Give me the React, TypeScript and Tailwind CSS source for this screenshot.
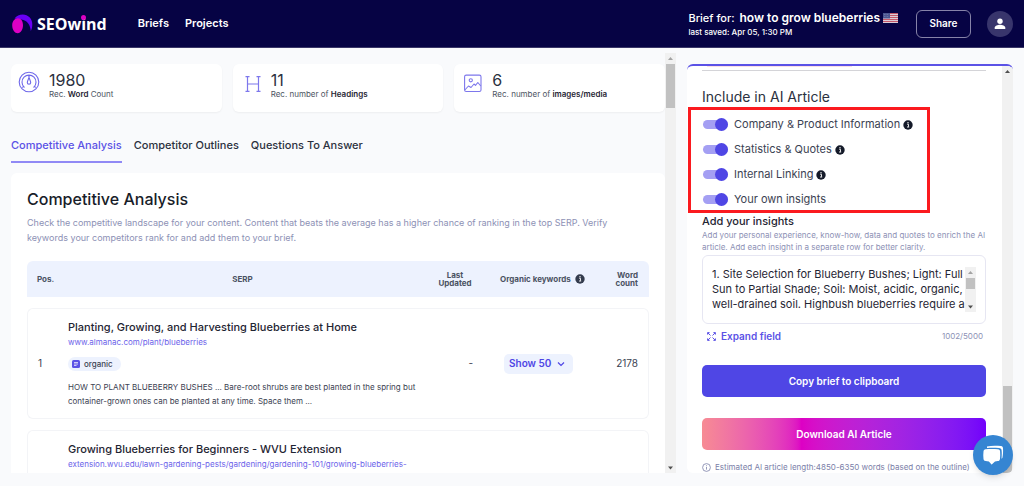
import { useState } from 'react';

const stats = [
  { value: '1980', before: 'Rec. ', bold: 'Word', after: ' Count', icon: <GaugeIcon /> },
  { value: '11', before: 'Rec. number of ', bold: 'Headings', after: '', icon: <HeadingIcon /> },
  { value: '6', before: 'Rec. number of ', bold: 'images/media', after: '', icon: <ImageIcon /> },
];

const tabs = ['Competitive Analysis', 'Competitor Outlines', 'Questions To Answer'];

type SerpRow = {
  title: string;
  url: string;
  pos?: number;
  type?: string;
  text?: string;
  updated?: string;
  keywords?: number;
  words?: number;
};

const serpData: SerpRow[] = [
  {
    pos: 1,
    title: 'Planting, Growing, and Harvesting Blueberries at Home',
    url: 'www.almanac.com/plant/blueberries',
    type: 'organic',
    text: 'HOW TO PLANT BLUEBERRY BUSHES ... Bare-root shrubs are best planted in the spring but container-grown ones can be planted at any time. Space them ...',
    updated: '-',
    keywords: 50,
    words: 2178,
  },
  {
    title: 'Growing Blueberries for Beginners - WVU Extension',
    url: 'extension.wvu.edu/lawn-gardening-pests/gardening/gardening-101/growing-blueberries-',
  },
];

const options = [
  { label: 'Company & Product Information', info: true },
  { label: 'Statistics & Quotes', info: true },
  { label: 'Internal Linking', info: true },
  { label: 'Your own insights', info: false },
];

const defaultInsights =
  '1. Site Selection for Blueberry Bushes; Light: Full Sun to Partial Shade; Soil: Moist, acidic, organic, well-drained soil. Highbush blueberries require a';

function GaugeIcon() {
  return (
    <svg className="size-[22px]" viewBox="0 0 22 22" fill="none" stroke="#6f68ea" strokeWidth="1.1" strokeLinecap="round">
      <circle cx="11" cy="11" r="9.8" />
      <path d="M6.2 16.2a7 7 0 1 1 9.6 0M5.6 15.4l-1 .8M16.4 15.4l1 .8M11 4.2v1.4" />
      <path d="M11 6.5c-.8 2.2-1.7 3.8-1.7 5a1.7 1.7 0 0 0 3.4 0c0-1.2-.9-2.8-1.7-5z" />
    </svg>
  );
}

function HeadingIcon() {
  return (
    <svg className="size-[22px]" viewBox="0 0 22 22" fill="none" stroke="#7d77ec" strokeWidth="1.2">
      <path d="M7.5 6v14M18.500 6v14M7.500 13h11M5.500 5.600h4M16.500 5.600h4M5.500 20.400h4M16.500 20.400h4" />
    </svg>
  );
}

function ImageIcon() {
  return (
    <svg className="size-[22px]" viewBox="0 0 22 22" fill="none" stroke="#7d77ec" strokeWidth="1.1" strokeLinejoin="round">
      <rect x="3.600" y="4.100" width="16.400" height="16.400" rx="1.600" />
      <circle cx="9.800" cy="9.300" r="1.600" />
      <path d="M3.800 19l3.700-4 2.500 1.500 3-3.500 1.500 1.300 2.300-2.800 3 3.500" />
    </svg>
  );
}

function InfoIcon({ className = '' }) {
  return (
    <svg className={`size-[10px] shrink-0 ${className}`} viewBox="0 0 10 10">
      <circle cx="5" cy="5" r="4.7" fill="currentColor" />
      <path d="M4.2 4.3h1.3v2.5M4 7h2.2" stroke="#fff" strokeWidth="0.9" fill="none" />
      <circle cx="5" cy="2.7" r="0.7" fill="#fff" />
    </svg>
  );
}

function Flag() {
  return (
    <svg className="h-[10px] w-[15px]" viewBox="0 0 15 10">
      <rect width="15" height="10" fill="#dccdd6" />
      <path d="M0 .5h15M0 2.500h15M0 4.500h15M0 6.500h15M0 8.500h15" stroke="#c4586a" strokeWidth="1.100" />
      <rect width="7" height="5.500" fill="#4b5590" />
      <path d="M1 1.500h5M1 3.500h5" stroke="#8d94bd" strokeWidth="0.600" strokeDasharray="0.800 0.800" />
    </svg>
  );
}

function Logo() {
  return (
    <a href="#" className="flex items-center gap-1 font-['Open_Sans',sans-serif] text-[16px] leading-5 font-bold text-white">
      <svg className="h-5 w-[22px]" viewBox="0 0 22 20">
        <path d="M3.500 4.500C5.500 1.500 8.500.4 11.800.4c5.300 0 9.600 4.400 9.500 9.800 0 2.600-.5 5-1.500 6.800-.4-5.400-2.900-9.400-7.300-10.900C9.500 5 6 4.600 3.500 4.500z" fill="#6a00f5" />
        <path d="M6.800 4.300c3.500 0 5.200 3.200 5.200 6.900 0 4-2.200 8-5.200 8s-5.600-3.500-5.600-8c0-4 2.600-6.900 5.600-6.900z" fill="#dd00c4" />
      </svg>
      <span>
        SEOw
        <span className="relative">
          i
          <span className="absolute top-[2px] left-0 size-[5px] rounded-full bg-[#dd00c4]" />
        </span>
        nd
      </span>
    </a>
  );
}

function Arrow({ up = false, dim = false }) {
  return (
    <svg className={`h-[11px] w-full shrink-0 ${dim ? 'text-[#a3a3a3]' : 'text-[#505050]'}`} viewBox="0 0 11 11">
      <path d={up ? 'M5.5 4l2.5 3h-5z' : 'M5.5 7.5l2.5-3h-5z'} fill="currentColor" />
    </svg>
  );
}

const Header = () => (
  <header className="flex h-12 shrink-0 items-center border-b border-[#3a3768] bg-[#060344] px-[11px] font-semibold text-white">
    <Logo />
    <nav className="ml-[31px] flex flex-1 gap-4 text-[11px]">
      <a href="#">Briefs</a>
      <a href="#">Projects</a>
    </nav>
    <div className="mr-[18px]">
      <div className="flex items-center text-[12px] leading-4">
        <span className="mr-[5px] text-[11px] font-medium">Brief for:</span>
        <span className="mr-[3px]">how to grow blueberries</span>
        <Flag />
      </div>
      <p className="text-[8px] leading-3 font-medium">last saved: Apr 05, 1:30 PM</p>
    </div>
    <button className="mr-4 h-7 w-[55px] rounded-md border border-[#8683a8] text-[10px]">Share</button>
    <button aria-label="Account" className="flex size-[26px] items-center justify-center rounded-full bg-[#38356c]">
      <svg className="size-[14px]" viewBox="0 0 14 14" fill="#fff">
        <circle cx="7" cy="4.2" r="2.7" />
        <path d="M1.700 12v-1.200c0-2 3-3 5.300-3s5.300 1 5.300 3V12z" />
      </svg>
    </button>
  </header>
);

const SerpTable = () => (
  <table className="-mt-[11px] w-full table-fixed border-separate border-spacing-x-0 border-spacing-y-[11px] text-[#3b4252]">
    <colgroup>
      <col className="w-[30px]" />
      <col />
      <col className="w-[56px]" />
      <col className="w-[109px]" />
      <col className="w-[56px]" />
    </colgroup>
    <thead>
      <tr className="h-9 text-[8px] leading-2 font-semibold text-[#4b5263] [&>th]:bg-[#edf2fe]">
        <th className="rounded-tl-md pl-[10px] text-left">Pos.</th>
        <th>SERP</th>
        <th className="pr-[10px] pl-2">Last Updated</th>
        <th className="pl-4">
          <span className="flex items-center gap-1 whitespace-nowrap">
            Organic keywords <InfoIcon className="text-[#333b4d]" />
          </span>
        </th>
        <th className="rounded-tr-md pr-[11px] text-right">Word count</th>
      </tr>
    </thead>
    <tbody>
      {serpData.map((row) => (
        <tr key={row.title} className="h-[111px] text-[10px] [&>td]:border-y [&>td]:border-[#f3f4f7]">
          <td className="rounded-l-md border-l pl-[10px]">{row.pos}</td>
          <td className="px-[11px] pt-[11px] align-top">
            <h3 className="text-[11px] leading-[14px] font-medium text-[#1f2533]">{row.title}</h3>
            <a href="#" className="mt-[2px] block text-[8px] leading-3 text-[#6c63ea]">
              {row.url}
            </a>
            {row.type && (
              <span className="mt-[9px] inline-flex h-[14px] items-center gap-1 rounded-full bg-[#edf2fe] px-1 pr-2 text-[8px] font-medium">
                <svg className="size-2" viewBox="0 0 8 8">
                  <rect width="8" height="8" rx="1.5" fill="#5b52e6" />
                  <path d="M2 2.5h4M2 4h4M2 5.5h2.5" stroke="#fff" strokeWidth="0.7" />
                </svg>
                {row.type}
              </span>
            )}
            <p className="mt-2 text-[8px] leading-[14px]">{row.text}</p>
          </td>
          <td className="pr-[11px] text-right">{row.updated}</td>
          <td className="pl-5">
            {row.keywords && (
              <button className="flex h-5 items-center gap-[6px] rounded-[5px] bg-[#edf2fe] px-[5px] pr-2 text-[10px] font-semibold text-[#4f46e5]">
                Show {row.keywords}
                <svg className="size-[8px]" viewBox="0 0 8 8" fill="none" stroke="currentColor" strokeWidth="1.2">
                  <path d="M1 2.5l3 3 3-3" />
                </svg>
              </button>
            )}
          </td>
          <td className="rounded-r-md border-r pr-[10px] text-right">{row.words}</td>
        </tr>
      ))}
    </tbody>
  </table>
);

const BriefPanel = () => (
  <section className="flex min-w-0 flex-1 pt-[5px]">
    <div className="flex min-w-0 flex-1 flex-col overflow-hidden pt-[11px]">
      <div className="grid shrink-0 grid-cols-3 gap-[11px]">
        {stats.map((stat) => (
          <div key={stat.value} className="flex h-12 gap-[9px] rounded-md bg-white pt-[7px] pl-[7px] shadow-xs">
            {stat.icon}
            <div>
              <p className="text-[16px] leading-[18px] text-[#2b3140]">{stat.value}</p>
              <p className="text-[8px] leading-[10px] whitespace-nowrap text-[#4d5462]">
                {stat.before}
                <b className="font-semibold text-[#1f2533]">{stat.bold}</b>
                {stat.after}
              </p>
            </div>
          </div>
        ))}
      </div>

      <div className="mt-6 flex shrink-0 gap-3 text-[11px] font-medium text-[#2b3140]">
        {tabs.map((tab, i) => (
          <button
            key={tab}
            className={i === 0 ? 'h-[27px] border-b-2 border-[#9089f5] pb-[6px] text-[#5b52e6]' : 'h-[27px] border-b-2 border-transparent pb-[6px]'}
          >
            {tab}
          </button>
        ))}
      </div>

      <div className="mt-[10px] min-h-0 flex-1 overflow-hidden rounded-t-md bg-white px-4 pt-4">
        <h2 className="text-[16px] leading-5 font-medium text-[#181d29]">Competitive Analysis</h2>
        <p className="mt-[6px] mr-4 mb-4 text-[9px] leading-[15px] text-[#8d91b5]">
          Check the competitive landscape for your content. Content that beats the average has a higher chance of ranking
          in the top SERP. Verify keywords your competitors rank for and add them to your brief.
        </p>
        <SerpTable />
      </div>
    </div>
    <div className="flex w-[11px] flex-col bg-[#f1f1f1]">
      <Arrow up dim />
      <div className="mx-px h-11 bg-[#c1c1c1]" />
      <div className="flex-1" />
      <Arrow />
    </div>
  </section>
);

const ArticlePanel = () => {
  const [insights, setInsights] = useState(defaultInsights);

  return (
    <aside className="mt-4 flex w-[326px] shrink-0 overflow-hidden rounded-md border-t-2 border-[#5b52e6] bg-white">
      <div className="min-w-0 flex-1 overflow-hidden">
        <div className="mr-[150px] ml-5 h-px bg-[#fbdfe5]" />
        <hr className="mt-[3px] mr-4 ml-[15px] border-[#d4d4d8]" />
        <h2 className="mt-4 ml-[15px] text-[14px] leading-5 text-[#2b3140]">Include in AI Article</h2>

        <div className="mr-[72px] ml-px flex flex-col gap-3 border-3 border-[#fb1a1f] pt-2 pb-1 pl-3">
          {options.map((option) => (
            <label key={option.label} className="flex h-[13px] items-center text-[11px] text-[#3b4252]">
              <input
                type="checkbox"
                role="switch"
                defaultChecked
                className="mr-[6px] flex h-[9px] w-[25px] appearance-none items-center rounded-full bg-[#a49ff3] before:size-[13px] before:rounded-full before:bg-[#4f46e5] checked:justify-end"
              />
              {option.label}
              {option.info && <InfoIcon className="ml-[3px] text-[#141a29]" />}
            </label>
          ))}
        </div>

        <div className="mr-4 ml-[15px] pt-px">
          <label htmlFor="insights" className="block text-[11px] leading-[15px] font-medium text-[#1f2533]">
            Add your insights
          </label>
          <p className="text-[8px] leading-3 text-[#8d91b5]">
            Add your personal experience, know-how, data and quotes to enrich the AI article. Add each insight in a
            separate row for better clarity.
          </p>
          <div className="mt-[2px] flex rounded-md border border-[#e6e6f2] py-[11px] pr-[9px] pl-[9px]">
            <textarea
              id="insights"
              rows={3}
              value={insights}
              onChange={(e) => setInsights(e.target.value)}
              className="block min-w-0 flex-1 resize-none overflow-hidden text-[11px] leading-[15px] text-[#1f2533] outline-none"
            />
            <div className="flex w-[11px] flex-col bg-[#f1f1f1]">
              <Arrow up dim />
              <div className="mx-px h-[11px] bg-[#c1c1c1]" />
              <div className="flex-1" />
              <Arrow />
            </div>
          </div>
          <div className="mt-1 flex items-center justify-between pr-[3px] pl-[5px] leading-4">
            <button className="flex items-center gap-[5px] text-[10px] font-semibold text-[#5b52e6]">
              <svg className="size-[9px]" viewBox="0 0 9 9" fill="none" stroke="currentColor" strokeWidth="1">
                <path d="M.6 2.600V.6h2M6.400.6h2v2M8.400 6.400v2h-2M2.600 8.400h-2v-2M.8.8l2.700 2.700M8.200.8L5.500 3.500M.8 8.200l2.700-2.700M8.200 8.200L5.500 5.500" />
              </svg>
              Expand field
            </button>
            <span className="text-[8px] text-[#8d91b5]">1002/5000</span>
          </div>
          <button className="mt-[21px] block h-8 w-full rounded-[5px] bg-[#4f46e5] text-[10px] font-semibold text-white">
            Copy brief to clipboard
          </button>
          <button className="mt-[21px] block h-8 w-full rounded-[5px] bg-linear-to-r from-[#f78b93] via-[#dd00c4] via-35% to-[#7200fb] text-[10px] font-semibold text-white">
            Download AI Article
          </button>
          <p className="mt-[11px] flex items-center gap-1 text-[8px] leading-3 whitespace-nowrap text-[#7b80a8]">
            <svg className="size-[9px] shrink-0" viewBox="0 0 9 9" fill="none" stroke="currentColor" strokeWidth="0.8">
              <circle cx="4.5" cy="4.5" r="3.9" />
              <path d="M4.500 4v2.600M4.500 2.300v.9" />
            </svg>
            Estimated AI article length:4850-6350 words (based on the outline)
          </p>
        </div>
      </div>
      <div className="flex w-[11px] flex-col bg-[#f1f1f1]">
        <Arrow up />
        <div className="flex-1" />
        <div className="mx-px h-[87px] bg-[#c1c1c1]" />
      </div>
    </aside>
  );
};

const App = () => {
  return (
    <div className="flex h-screen flex-col overflow-hidden bg-[#f9fafc] font-['Inter',sans-serif]">
      <Header />
      <main className="flex min-h-0 flex-1 gap-[11px] px-[11px] pb-[13px]">
        <BriefPanel />
        <ArticlePanel />
      </main>
      <button
        aria-label="Open chat"
        className="fixed right-[11px] bottom-[11px] flex size-10 items-center justify-center rounded-full bg-[#3585d2] shadow-md"
      >
        <svg className="size-6" viewBox="0 0 24 24" fill="#fff">
          <path d="M6 3.500c4-1 9-1 14-.5 1.400.2 2 1 2 2.300.2 3 .1 6-.5 9.200-.2.700-.5 1-1 1.300.3-3 .4-6 .1-8.300-.2-1.600-1-2.300-2.600-2.400-4-.4-8-.4-12-.1z" />
          <path d="M4.500 6.300c4.200-.5 8.400-.5 12.500 0 1.400.2 2 .9 2.100 2.200.2 2.600.2 5-.1 7.500-.2 1.300-.9 2-2.200 2.100l-2.800.3-3 2.900c-.2.300-.5.300-.7 0l-2.400-2.900-3.200-.3c-1.400-.2-2-.9-2.200-2.100-.3-2.500-.3-5 0-7.500.2-1.300.8-2 2-2.200z" />
        </svg>
      </button>
    </div>
  );
};

export default App;
